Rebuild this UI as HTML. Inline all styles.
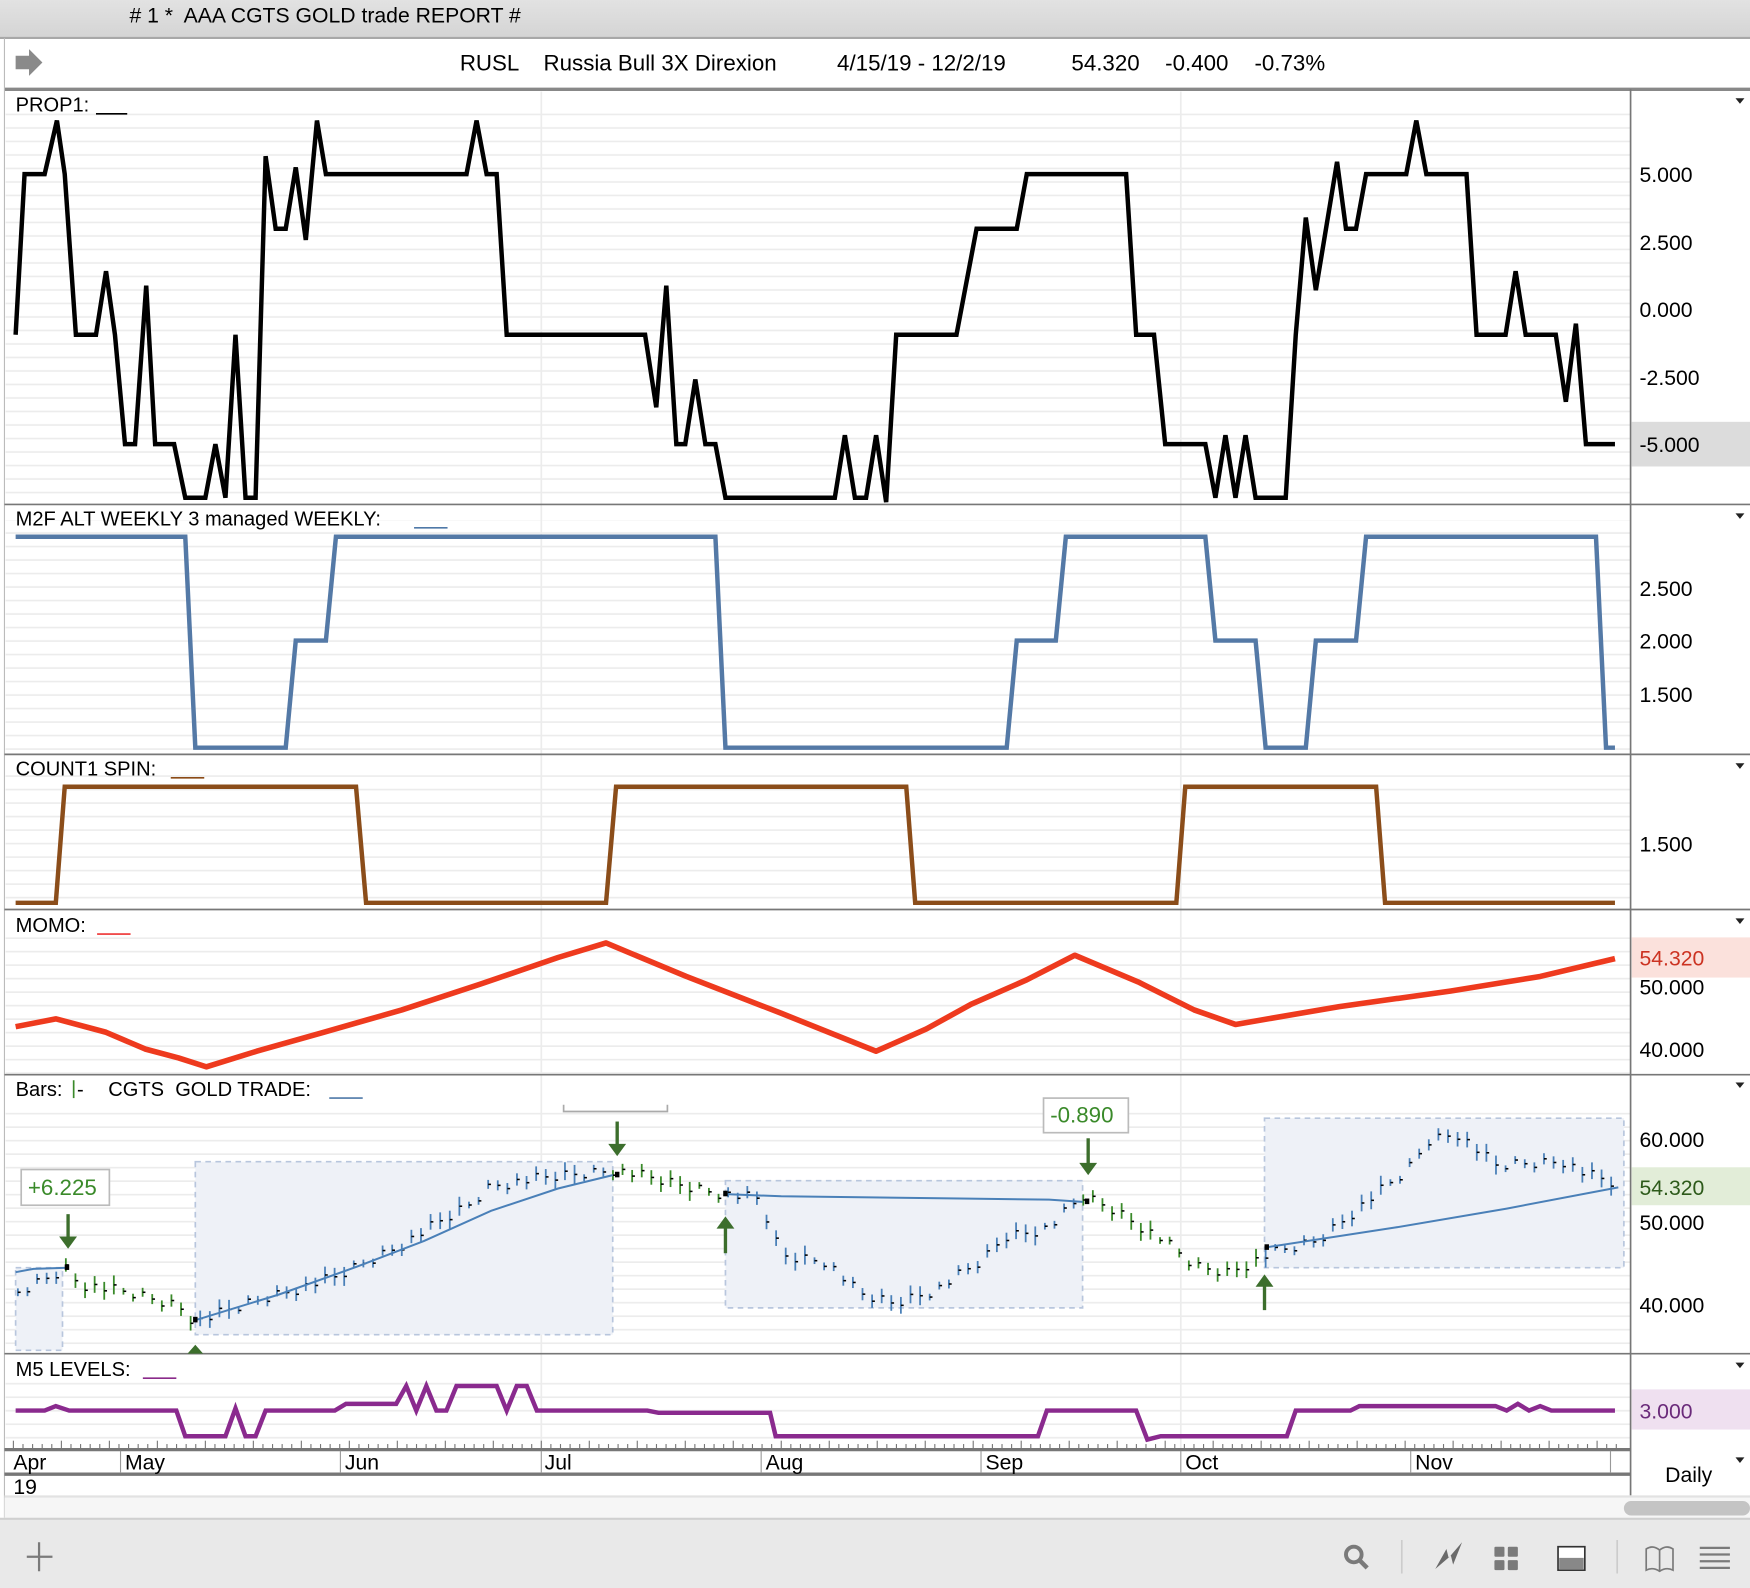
<!DOCTYPE html>
<html><head><meta charset="utf-8"><style>
html,body{margin:0;padding:0;background:#fff;overflow:hidden}
svg{display:block}
text{font-family:"Liberation Sans",Arial,sans-serif;fill:#000;white-space:pre}
</style></head><body>
<svg id="s" width="1750" height="1588" viewBox="0 0 1568 1423" preserveAspectRatio="none" xmlns="http://www.w3.org/2000/svg" xml:space="preserve">
<defs>
<pattern id="g" x="0" y="0" width="10" height="12.1" patternUnits="userSpaceOnUse"><rect x="0" y="5" width="10" height="1.5" fill="#ececec"/></pattern>
<linearGradient id="tb" x1="0" y1="0" x2="0" y2="1"><stop offset="0" stop-color="#e2e2e2"/><stop offset="1" stop-color="#d4d4d4"/></linearGradient>
</defs>
<rect width="1568" height="1423" fill="#fff"/>
<rect x="0" y="0" width="1568" height="34" fill="url(#tb)"/>
<line x1="0" y1="34" x2="1568" y2="34" stroke="#a8a8a8" stroke-width="2"/>
<text x="116" y="20" font-size="19"># 1 *  AAA CGTS GOLD trade REPORT #</text>
<path d="M14 50h12v-6l12 12-12 12v-6h-12z" fill="#8a8a8a"/>
<text x="412" y="63" font-size="20">RUSL</text>
<text x="487" y="63" font-size="20">Russia Bull 3X Direxion</text>
<text x="750" y="63" font-size="20">4/15/19 - 12/2/19</text>
<text x="960" y="63" font-size="20">54.320</text>
<text x="1044" y="63" font-size="20">-0.400</text>
<text x="1124" y="63" font-size="20">-0.73%</text>
<line x1="4" y1="80" x2="1568" y2="80" stroke="#888" stroke-width="3"/>
<line x1="4" y1="34" x2="4" y2="1360" stroke="#bbb" stroke-width="1"/>
<rect x="5" y="94" width="1456" height="358" fill="url(#g)"/>
<rect x="5" y="466" width="1456" height="210" fill="url(#g)"/>
<rect x="5" y="690" width="1456" height="125" fill="url(#g)"/>
<rect x="5" y="840" width="1456" height="123" fill="url(#g)"/>
<rect x="5" y="990" width="1456" height="223" fill="url(#g)"/>
<rect x="5" y="1238" width="1456" height="60" fill="url(#g)"/>
<g stroke="#ececec" stroke-width="1.5">
<line x1="485" y1="82" x2="485" y2="1298"/><line x1="1058" y1="82" x2="1058" y2="1298"/>
</g>
<g stroke="#777" stroke-width="1.5">
<line x1="4" y1="452" x2="1568" y2="452"/><line x1="4" y1="676" x2="1568" y2="676"/>
<line x1="4" y1="815" x2="1568" y2="815"/><line x1="4" y1="963" x2="1568" y2="963"/>
<line x1="4" y1="1213" x2="1568" y2="1213"/>
</g>
<line x1="1461" y1="80" x2="1461" y2="1340" stroke="#777" stroke-width="1.5"/>
<rect x="1462" y="378" width="106" height="40" fill="#dcdcdc"/>
<rect x="1462" y="840" width="106" height="36" fill="#fbe1dc"/>
<rect x="1462" y="1046" width="106" height="34" fill="#e2edd8"/>
<rect x="1462" y="1245" width="106" height="36" fill="#efe0f0"/>
<g font-size="19">
<text x="1469" y="163">5.000</text><text x="1469" y="224">2.500</text><text x="1469" y="284">0.000</text>
<text x="1469" y="345">-2.500</text><text x="1469" y="405">-5.000</text>
<text x="1469" y="534">2.500</text><text x="1469" y="581">2.000</text><text x="1469" y="629">1.500</text>
<text x="1469" y="763">1.500</text>
<text x="1469" y="891">50.000</text><text x="1469" y="947">40.000</text>
<text x="1469" y="865" style="fill:#cc3322">54.320</text>
<text x="1469" y="1028">60.000</text><text x="1469" y="1102">50.000</text><text x="1469" y="1176">40.000</text>
<text x="1469" y="1071" style="fill:#2d5a1a">54.320</text>
<text x="1469" y="1271" style="fill:#6a2a7a">3.000</text>
</g>
<g fill="#222"><path d="M1555 88h8l-4 5z"/><path d="M1555 460h8l-4 5z"/><path d="M1555 684h8l-4 5z"/><path d="M1555 823h8l-4 5z"/><path d="M1555 970h8l-4 5z"/><path d="M1555 1221h8l-4 5z"/><path d="M1555 1306h8l-4 5z"/></g>
<g font-size="18">
<text x="14" y="100">PROP1:</text><line x1="86" y1="102" x2="114" y2="102" stroke="#000" stroke-width="1.5"/>
<text x="14" y="471">M2F ALT WEEKLY 3 managed WEEKLY:</text><line x1="371" y1="473" x2="401" y2="473" stroke="#4f79a8" stroke-width="1.5"/>
<text x="14" y="695">COUNT1 SPIN:</text><line x1="153" y1="697" x2="183" y2="697" stroke="#8b4a16" stroke-width="1.5"/>
<text x="14" y="835">MOMO:</text><line x1="87" y1="837" x2="117" y2="837" stroke="#e33" stroke-width="1.5"/>
<text x="14" y="982">Bars:</text><line x1="66" y1="968" x2="66" y2="984" stroke="#3a8a2a" stroke-width="1.5"/><text x="69" y="982">-</text><text x="97" y="982">CGTS  GOLD TRADE:</text><line x1="295" y1="984" x2="325" y2="984" stroke="#4f79a8" stroke-width="1.5"/>
<text x="14" y="1233">M5 LEVELS:</text><line x1="128" y1="1235" x2="158" y2="1235" stroke="#8a2a8a" stroke-width="1.5"/>
</g>
<polyline fill="none" stroke="#000" stroke-width="4" points="14,300 22,156 40,156 51,108 58,156 68,300 86,300 95,243 103,300 112,398 121,398 131,256 139,398 156,398 166,446 184,446 193,398 202,446 211,300 220,446 229,446 238,140 247,205 256,205 265,150 274,215 284,108 292,156 418,156 427,108 436,156 445,156 454,300 578,300 588,365 597,256 606,398 614,398 623,340 632,398 641,398 650,446 748,446 757,390 766,446 776,446 785,390 794,450 803,300 857,300 875,205 911,205 920,156 1009,156 1018,300 1034,300 1044,398 1080,398 1089,446 1098,390 1107,446 1116,390 1125,446 1152,446 1161,300 1170,195 1179,260 1198,145 1206,205 1215,205 1224,156 1260,156 1269,108 1278,156 1314,156 1323,300 1349,300 1358,243 1367,300 1394,300 1403,360 1412,290 1421,398 1447,398"/>
<polyline fill="none" stroke="#5479a6" stroke-width="4" points="14,481 166,481 175,670 256,670 265,574 292,574 301,481 641,481 650,670 902,670 911,574 946,574 955,481 1080,481 1089,574 1125,574 1134,670 1170,670 1179,574 1215,574 1224,481 1430,481 1439,670 1447,670"/>
<polyline fill="none" stroke="#8b4d1a" stroke-width="4" points="14,809 50,809 58,705 319,705 328,809 543,809 552,705 812,705 820,809 1054,809 1062,705 1233,705 1241,809 1447,809"/>
<polyline fill="none" stroke="#ee3a1e" stroke-width="5" stroke-linejoin="round" points="14,920 50,913 95,925 130,940 160,948 185,956 230,942 290,925 360,905 430,882 500,858 543,845 615,875 700,908 785,942 830,922 870,900 920,878 963,856 1020,880 1070,905 1107,918 1200,902 1300,888 1380,875 1447,859"/>
<g fill="#eef1f7" stroke="#b8c6dd" stroke-width="1.5" stroke-dasharray="5 4">
<rect x="14" y="1136" width="42" height="74"/><rect x="175" y="1041" width="374" height="155"/>
<rect x="650" y="1058" width="320" height="114"/><rect x="1133" y="1002" width="322" height="134"/>
</g>
<g id="bars"></g>
<g fill="none" stroke="#4a80b8" stroke-width="1.8">
<polyline points="14,1140 30,1137 60,1136"/>
<polyline points="175,1183 250,1160 320,1135 380,1112 440,1085 500,1065 549,1053"/>
<polyline points="650,1070 700,1072 860,1074 940,1075 970,1077"/>
<polyline points="1133,1118 1250,1100 1350,1083 1450,1064"/>
</g>
<g fill="#000"><rect x="58" y="1133" width="4" height="5"/><rect x="173" y="1180" width="4" height="5"/><rect x="551" y="1050" width="4" height="5"/><rect x="648" y="1067" width="4" height="5"/><rect x="972" y="1074" width="4" height="5"/><rect x="1133" y="1115" width="4" height="5"/></g>
<g fill="#3c6e2c" stroke="#3c6e2c">
<line x1="61" y1="1088" x2="61" y2="1110" stroke-width="3"/><path d="M53 1108h16l-8 11z" stroke="none"/>
<line x1="553" y1="1005" x2="553" y2="1027" stroke-width="3"/><path d="M545 1025h16l-8 11z" stroke="none"/>
<line x1="975" y1="1020" x2="975" y2="1044" stroke-width="3"/><path d="M967 1042h16l-8 11z" stroke="none"/>
<line x1="650" y1="1123" x2="650" y2="1100" stroke-width="3"/><path d="M642 1101h16l-8-11z" stroke="none"/>
<line x1="1133" y1="1174" x2="1133" y2="1152" stroke-width="3"/><path d="M1125 1153h16l-8-11z" stroke="none"/>
<path d="M168 1213h14l-7-8z" stroke="none"/>
</g>
<rect x="19" y="1048" width="79" height="32" fill="#fff" stroke="#bbb" stroke-width="1.5"/>
<text x="25" y="1071" font-size="20" style="fill:#3a8a2a">+6.225</text>
<rect x="935" y="984" width="76" height="31" fill="#fff" stroke="#bbb" stroke-width="1.5"/>
<text x="941" y="1006" font-size="20" style="fill:#3a8a2a">-0.890</text>
<path d="M505 990v6h93v-6" fill="none" stroke="#aaa" stroke-width="1.5"/>
<polyline fill="none" stroke="#8a2a8e" stroke-width="4" points="14,1264 40,1264 50,1260 62,1264 158,1264 166,1287 202,1287 211,1262 220,1287 229,1287 238,1264 300,1264 310,1258 355,1258 364,1242 373,1264 382,1242 391,1264 400,1264 409,1242 445,1242 454,1264 463,1242 472,1242 481,1264 580,1264 590,1266 690,1266 695,1287 930,1287 938,1264 1018,1264 1028,1290 1040,1287 1153,1287 1161,1264 1210,1264 1218,1260 1340,1260 1350,1264 1360,1258 1370,1264 1380,1260 1390,1264 1447,1264"/>
<g id="ticks" stroke="#777" stroke-width="1"></g>
<line x1="4" y1="1299" x2="1461" y2="1299" stroke="#777" stroke-width="3"/>
<line x1="4" y1="1321" x2="1461" y2="1321" stroke="#777" stroke-width="3"/>
<g stroke="#999" stroke-width="1"><line x1="108" y1="1300" x2="108" y2="1320"/><line x1="305" y1="1300" x2="305" y2="1320"/><line x1="485" y1="1300" x2="485" y2="1320"/><line x1="682" y1="1300" x2="682" y2="1320"/><line x1="879" y1="1300" x2="879" y2="1320"/><line x1="1058" y1="1300" x2="1058" y2="1320"/><line x1="1264" y1="1300" x2="1264" y2="1320"/><line x1="1443" y1="1300" x2="1443" y2="1320"/></g>
<g font-size="19">
<text x="12" y="1317">Apr</text><text x="112" y="1317">May</text><text x="309" y="1317">Jun</text><text x="488" y="1317">Jul</text><text x="686" y="1317">Aug</text><text x="883" y="1317">Sep</text><text x="1062" y="1317">Oct</text><text x="1268" y="1317">Nov</text>
<text x="12" y="1339">19</text><text x="1492" y="1328">Daily</text>
</g>
<rect x="4" y="1341" width="1564" height="20" fill="#f6f6f6"/>
<line x1="4" y1="1341" x2="1568" y2="1341" stroke="#e2e2e2" stroke-width="2"/>
<rect x="1455" y="1345" width="113" height="13" rx="6.5" fill="#c4c4c4"/>
<rect x="0" y="1361" width="1568" height="62" fill="#e9e9e9"/>
<line x1="0" y1="1361" x2="1568" y2="1361" stroke="#d0d0d0" stroke-width="2"/>
<g stroke="#7a7a7a" stroke-width="2"><line x1="35" y1="1382" x2="35" y2="1408"/><line x1="24" y1="1395" x2="47" y2="1395"/></g>
<circle cx="1213" cy="1393" r="7" fill="none" stroke="#7a7a7a" stroke-width="3.5"/><line x1="1218" y1="1398" x2="1225" y2="1405" stroke="#7a7a7a" stroke-width="4"/>
<line x1="1256" y1="1380" x2="1256" y2="1410" stroke="#ccc" stroke-width="1.5"/>
<path d="M1286 1406l10-18 2 8 12-14-8 20-2-8z" fill="#6a6a6a"/>
<g fill="#7a7a7a"><rect x="1339" y="1386" width="9" height="9" rx="1"/><rect x="1351" y="1386" width="9" height="9" rx="1"/><rect x="1339" y="1398" width="9" height="9" rx="1"/><rect x="1351" y="1398" width="9" height="9" rx="1"/></g>
<rect x="1396" y="1386" width="24" height="21" fill="#fff" stroke="#333" stroke-width="1.5"/><rect x="1397" y="1396" width="22" height="10" fill="#888"/>
<line x1="1449" y1="1380" x2="1449" y2="1410" stroke="#ccc" stroke-width="1.5"/>
<path d="M1475 1407v-19q6-4 12 1q6-5 12-1v19q-6-3-12 1q-6-4-12-1zM1487 1389v19" fill="none" stroke="#7a7a7a" stroke-width="1.5"/>
<g stroke="#7a7a7a" stroke-width="2"><line x1="1523" y1="1387" x2="1550" y2="1387"/><line x1="1523" y1="1393" x2="1550" y2="1393"/><line x1="1523" y1="1399" x2="1550" y2="1399"/><line x1="1523" y1="1405" x2="1550" y2="1405"/></g>
</svg>
<script>
(function(){
var pts=[[14,1160],[60,1136],[70,1150],[120,1160],[160,1170],[175,1185],[240,1162],[300,1145],[360,1115],[420,1080],[440,1062],[470,1058],[550,1048],[600,1060],[650,1070],[680,1075],[700,1125],[740,1130],[770,1160],[800,1168],[840,1155],[880,1130],[900,1108],[940,1100],[970,1072],[1000,1085],[1040,1110],[1070,1135],[1100,1140],[1135,1125],[1180,1112],[1220,1080],[1260,1050],[1280,1022],[1305,1015],[1340,1045],[1400,1040],[1420,1052],[1450,1062]];
function yAt(x){for(var i=0;i<pts.length-1;i++){if(x>=pts[i][0]&&x<=pts[i+1][0]){var t=(x-pts[i][0])/(pts[i+1][0]-pts[i][0]);return pts[i][1]+t*(pts[i+1][1]-pts[i][1]);}}return pts[pts.length-1][1];}
function inBox(x){return (x>=14&&x<=56)||(x>=175&&x<=549)||(x>=650&&x<=970)||(x>=1133&&x<=1455);}
var g=document.getElementById("bars"),s="",k=0;
for(var x=16;x<=1448;x+=8.6){k++;var y=yAt(x)+((k*37)%11-5);var h=6+(k*13)%12;var c=inBox(x)?"#4a80b8":"#3a8a2a";
s+='<line x1="'+x.toFixed(1)+'" y1="'+(y-h/2).toFixed(1)+'" x2="'+x.toFixed(1)+'" y2="'+(y+h/2).toFixed(1)+'" stroke="'+c+'" stroke-width="1.6"/>';
s+='<line x1="'+x.toFixed(1)+'" y1="'+(y).toFixed(1)+'" x2="'+(x+2.5).toFixed(1)+'" y2="'+y.toFixed(1)+'" stroke="#000" stroke-width="1.4"/>';}
g.innerHTML=s;
var t=document.getElementById("ticks"),u="";
for(var x2=12;x2<1450;x2+=8.6){var big=(Math.round((x2-12)/8.6)%5==0);u+='<line x1="'+x2.toFixed(1)+'" y1="'+(big?1291:1294)+'" x2="'+x2.toFixed(1)+'" y2="1298"/>';}
t.innerHTML=u;
})();
</script>
</body></html>
